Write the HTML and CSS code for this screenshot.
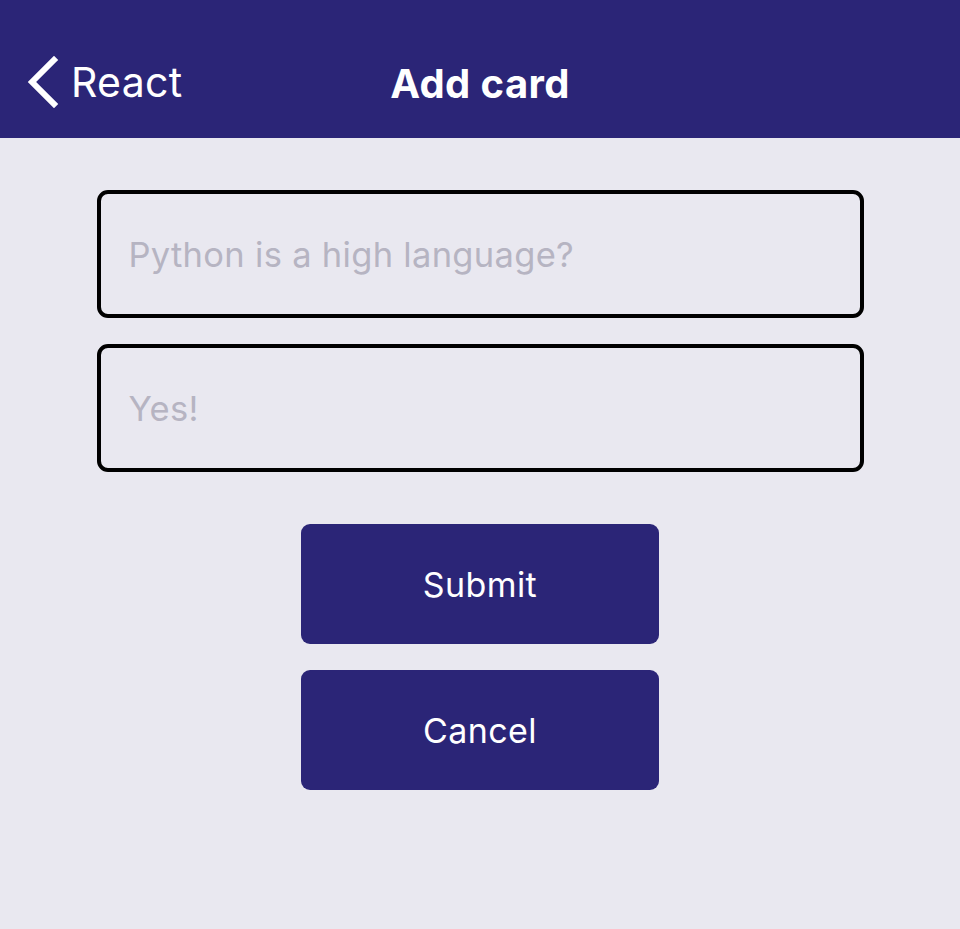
FILE: index.html
```html
<!DOCTYPE html>
<html>
<head>
<meta charset="utf-8">
<link rel="stylesheet" href="styles.css">
</head>
<body>
<header class="nav">
  <div class="back">
    <svg class="chev" width="34" height="52" viewBox="0 0 34 52"><path d="M29 4 L7 26 L29 48" fill="none" stroke="#fff" stroke-width="6" stroke-linecap="square" stroke-linejoin="miter"/></svg>
    <span class="back-label">React</span>
  </div>
  <h1 class="title">Add card</h1>
</header>
<main class="content">
  <div class="field"><span class="placeholder">Python is a high language?</span></div>
  <div class="field"><span class="placeholder">Yes!</span></div>
  <div class="buttons">
    <button class="btn">Submit</button>
    <button class="btn">Cancel</button>
  </div>
</main>
</body>
</html>
```
FILE: styles.css
```css
html, body {
  margin: 0;
  padding: 0;
  background: #e9e8f0;
  font-family: Inter, "Noto Sans", sans-serif;
}
.nav {
  height: 138px;
  background: #2b2577;
  position: relative;
  display: flex;
  align-items: center;
  justify-content: center;
}
.back {
  position: absolute;
  left: 25px;
  top: 56px;
  display: flex;
  align-items: center;
  gap: 12px;
  color: #fff;
}
.chev { display: block; }
.back-label {
  font-size: 41px;
  font-weight: 400;
  letter-spacing: 0.3px;
}
.title {
  margin: 28px 0 0 0;
  color: #fff;
  font-size: 40px;
  font-weight: 700;
  letter-spacing: 0.4px;
}
.content {
  display: flex;
  flex-direction: column;
  align-items: center;
  padding-top: 52px;
}
.field {
  width: 767px;
  height: 128px;
  box-sizing: border-box;
  border: 4px solid #000;
  border-radius: 11px;
  display: flex;
  align-items: center;
  padding-left: 28px;
  margin-bottom: 26px;
}
.placeholder {
  color: #b6b4c2;
  font-size: 34.5px;
  letter-spacing: 0.3px;
}
.buttons {
  display: flex;
  flex-direction: column;
  gap: 26px;
  margin-top: 26px;
}
.btn {
  width: 358px;
  height: 120px;
  border: none;
  border-radius: 9px;
  background: #2b2577;
  color: #fff;
  font-family: Inter, "Noto Sans", sans-serif;
  font-size: 34px;
  letter-spacing: 0.4px;
  padding: 0;
}
```
